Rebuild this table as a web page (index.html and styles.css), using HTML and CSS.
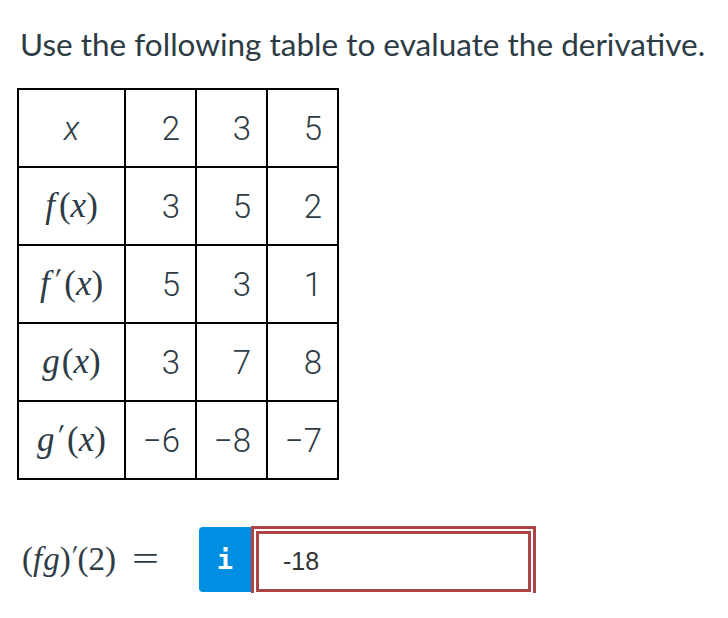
FILE: index.html
```html
<!DOCTYPE html>
<html>
<head>
<meta charset="utf-8">
<link rel="stylesheet" href="styles.css">
</head>
<body>
<div class="question">
  <p class="prompt">Use the following table to evaluate the derivative.</p>
  <table class="values">
    <tr>
      <td class="label"><span class="sx">x</span></td>
      <td class="num">2</td><td class="num">3</td><td class="num">5</td>
    </tr>
    <tr>
      <td class="label"><span class="m"><i class="f">f</i>(<i>x</i>)</span></td>
      <td class="num">3</td><td class="num">5</td><td class="num">2</td>
    </tr>
    <tr>
      <td class="label"><span class="m"><i class="f">f</i><span class="pr">′</span>(<i>x</i>)</span></td>
      <td class="num">5</td><td class="num">3</td><td class="num">1</td>
    </tr>
    <tr>
      <td class="label"><span class="m"><i class="g">g</i>(<i>x</i>)</span></td>
      <td class="num">3</td><td class="num">7</td><td class="num">8</td>
    </tr>
    <tr>
      <td class="label"><span class="m"><i class="g">g</i><span class="pr">′</span>(<i>x</i>)</span></td>
      <td class="num">−6</td><td class="num">−8</td><td class="num">−7</td>
    </tr>
  </table>
  <div class="answer">
    <span class="m eq">(<i class="ef">f</i><i class="eg">g</i>)<span class="pr epr">′</span>(2)<span class="equals">=</span></span>
    <div class="field">
      <span class="info">i</span>
      <div class="input-wrap"><div class="input">-18</div></div>
    </div>
  </div>
</div>
</body>
</html>
```

FILE: styles.css
```css
html, body {
  margin: 0;
  padding: 0;
  background: #fff;
}
.question {
  padding: 0 0 0 17px;
  color: #2d3b45;
  font-family: Lato, "Open Sans", sans-serif;
}
.prompt {
  margin: 0;
  padding-top: 25px;
  padding-left: 3px;
  font-size: 31.5px;
  line-height: 38px;
  height: 63px;
}
.values {
  border-collapse: collapse;
  table-layout: fixed;
  width: 322px;
}
.values td {
  border: 2px solid #000;
  height: 76px;
  padding: 0;
  font-family: Roboto, "Open Sans", sans-serif;
  font-weight: 300;
  font-size: 33px;
}
.values td.label {
  width: 105px;
  text-align: center;
}
.values td.num {
  text-align: right;
  padding-right: 15px;
}
.sx {
  font-style: italic;
  font-weight: 300;
}
.m {
  font-family: "Liberation Serif", "Times New Roman", "DejaVu Serif", serif;
  font-size: 35px;
  font-weight: 400;
  white-space: nowrap;
}
.m i {
  font-style: italic;
}
.m i.f {
  margin-right: 4px;
}
.m i.g {
  margin-right: 2px;
}
.pr {
  display: inline-block;
  font-size: 30px;
  transform: translateY(-6px) skewX(-10deg);
  margin-right: 4px;
}
.answer {
  display: flex;
  align-items: center;
  margin-top: 46px;
  padding-left: 5px;
}
.eq {
  font-size: 33px;
  width: 177px;
}
.m i.ef {
  margin-right: 1px;
}
.pr.epr {
  font-size: 27px;
  margin-right: 1px;
}
.equals {
  display: inline-block;
  margin-left: 16px;
  transform: scaleX(1.45);
  transform-origin: left center;
}
.field {
  display: flex;
  height: 67px;
}
.info {
  width: 52px;
  height: 65px;
  margin-top: 1px;
  background: #008ee2;
  border-radius: 4px 0 0 4px;
  color: #fff;
  font-family: "DejaVu Sans Mono", monospace;
  font-weight: 700;
  font-size: 27px;
  display: flex;
  align-items: center;
  justify-content: center;
}
.input-wrap {
  width: 275px;
  height: 61px;
  border: 3px solid #ad4446;
  padding: 2px;
}
.input {
  box-sizing: border-box;
  height: 100%;
  border: 3px solid #ad4446;
  padding-left: 24px;
  display: flex;
  align-items: center;
  font-family: "Liberation Sans", Arial, sans-serif;
  font-size: 25px;
  color: #333;
}
```
